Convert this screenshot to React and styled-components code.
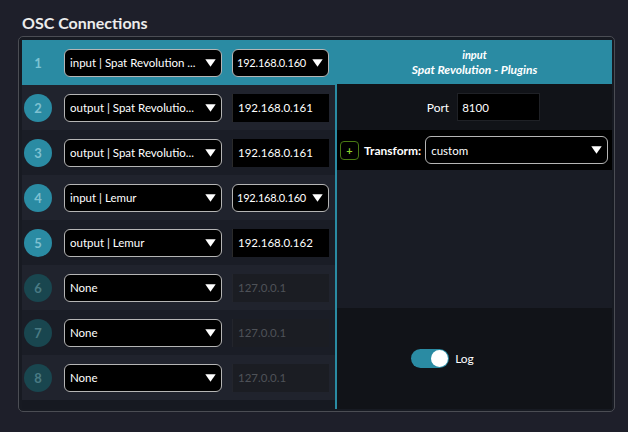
import React from "react";
import styled, { createGlobalStyle } from "styled-components";

const Global = createGlobalStyle`
  html, body { margin: 0; padding: 0; background: #1e1f2a; }
  body { font-family: Lato, "Noto Sans", sans-serif; color: #fff; }
  * { box-sizing: border-box; }
`;

const Page = styled.div`
  width: 628px;
  height: 432px;
  padding: 14px 13px 0 18px;
`;

const Title = styled.h1`
  margin: 0 0 4px 4px;
  font-size: 16px;
  font-weight: 700;
  line-height: 18px;
  color: #ececec;
`;

const Panel = styled.div`
  width: 597px;
  height: 376px;
  border: 1px solid #4b4d54;
  border-radius: 5px;
  padding: 3px 2px 2px 3px;
  display: flex;
  background: #171a22;
`;

const List = styled.div`
  width: 313px;
  flex: none;
  display: flex;
  flex-direction: column;
  background: #161921;
`;

const Row = styled.div`
  height: 45px;
  flex: none;
  display: flex;
  align-items: center;
  padding-left: 2px;
  background: ${(p) => (p.$selected ? "#2a8ba3" : p.$even ? "#20232d" : "#1a1d26")};
`;

const Num = styled.div`
  width: 28px;
  height: 28px;
  border-radius: 50%;
  flex: none;
  display: flex;
  align-items: center;
  justify-content: center;
  font-size: 13px;
  font-weight: 700;
  background: ${(p) => (p.$selected ? "transparent" : p.$active ? "#2a8ba3" : "#19464f")};
  color: ${(p) => (p.$selected ? "#7cc3d3" : p.$active ? "#7fc1d1" : "#4a7b84")};
  margin-right: 12px;
`;

const SelectBox = styled.div`
  width: ${(p) => p.$w}px;
  height: 28px;
  flex: none;
  background: #000;
  border: 1px solid #b5b5b5;
  border-radius: 6px;
  display: flex;
  align-items: center;
  padding: 0 5px 0 ${(p) => (p.$compact ? 4 : 5)}px;
  font-size: ${(p) => (p.$compact ? 11 : 11.5)}px;
  letter-spacing: ${(p) => (p.$compact ? "-0.2px" : "0")};
  color: #fff;
  gap: 3px;
`;

const SelectText = styled.span`
  flex: 1;
  white-space: nowrap;
  overflow: hidden;
`;

const IpInput = styled.div`
  width: 97px;
  height: 28px;
  flex: none;
  background: ${(p) => (p.$disabled ? "#1b1d23" : "#000")};
  border-left: 1px solid ${(p) => (p.$disabled ? "#23252c" : "#2a2a2a")};
  display: flex;
  align-items: center;
  padding-left: 5px;
  font-size: 11.5px;
  color: ${(p) => (p.$disabled ? "#4f5258" : "#fff")};
`;

const Gap = styled.div`
  width: 10px;
  flex: none;
`;

const Side = styled.div`
  flex: 1;
  display: flex;
  flex-direction: column;
`;

const Header = styled.div`
  height: 44px;
  flex: none;
  background: #2a8ba3;
  display: flex;
  flex-direction: column;
  align-items: center;
  justify-content: center;
  font-style: italic;
  font-weight: 700;
  color: #fff;
  line-height: 15px;
  padding-left: 2px;
`;

const HeaderSmall = styled.div`
  font-size: 11px;
`;
const HeaderBig = styled.div`
  font-size: 12px;
`;

const Body = styled.div`
  flex: 1;
  border-left: 2px solid #2a8ba3;
  display: flex;
  flex-direction: column;
`;

const PortSection = styled.div`
  height: 46px;
  background: #111318;
  display: flex;
  align-items: center;
  justify-content: center;
  gap: 8px;
  padding-left: 18px;
`;

const Label = styled.span`
  font-size: 12px;
  color: #fff;
  font-weight: ${(p) => (p.$bold ? 700 : 400)};
`;

const PortInput = styled.div`
  width: 83px;
  height: 28px;
  background: #000;
  border: 1px solid #1f2126;
  display: flex;
  align-items: center;
  padding-left: 4px;
  font-size: 11.5px;
  color: #fff;
`;

const TransformSection = styled.div`
  height: 40px;
  background: #000;
  display: flex;
  align-items: center;
  padding: 0 3px 0 3px;
  gap: 4px;
`;

const PlusButton = styled.div`
  width: 19px;
  height: 19px;
  border: 1px solid #4a7a14;
  border-radius: 4px;
  display: flex;
  align-items: center;
  justify-content: center;
  color: #8ed12f;
  font-size: 11px;
  font-weight: 700;
  margin-right: 1px;
`;

const Spacer = styled.div`
  flex: 1;
  background: #191c25;
`;

const LogSection = styled.div`
  height: 101px;
  background: #111318;
  display: flex;
  align-items: center;
  justify-content: center;
  gap: 6px;
  padding-right: 64px;
`;

const Toggle = styled.div`
  width: 38px;
  height: 19px;
  border-radius: 10px;
  background: #2a8ba3;
  display: flex;
  align-items: center;
  justify-content: flex-end;
  padding: 1px;
`;

const Knob = styled.div`
  width: 17px;
  height: 17px;
  border-radius: 50%;
  background: #fff;
`;

const Caret = () => (
  <svg width="11" height="8" viewBox="0 0 11 8" style={{ flex: "none" }}>
    <path d="M0.3 0.3 H10.7 L5.5 7.8 Z" fill="#fff" />
  </svg>
);

const Select = ({ w, compact, children }) => (
  <SelectBox $w={w} $compact={compact}>
    <SelectText>{children}</SelectText>
    <Caret />
  </SelectBox>
);

const rows = [
  { n: 1, name: "input | Spat Revolution ...", ip: "192.168.0.160", ipSelect: true, selected: true },
  { n: 2, name: "output | Spat Revolutio...", ip: "192.168.0.161" },
  { n: 3, name: "output | Spat Revolutio...", ip: "192.168.0.161" },
  { n: 4, name: "input | Lemur", ip: "192.168.0.160", ipSelect: true },
  { n: 5, name: "output | Lemur", ip: "192.168.0.162" },
  { n: 6, name: "None", ip: "127.0.0.1", disabled: true },
  { n: 7, name: "None", ip: "127.0.0.1", disabled: true },
  { n: 8, name: "None", ip: "127.0.0.1", disabled: true },
];

export default function App() {
  return (
    <Page>
      <Global />
      <Title>OSC Connections</Title>
      <Panel>
        <List>
          {rows.map((r) => (
            <Row key={r.n} $selected={r.selected} $even={r.n % 2 === 0}>
              <Num $selected={r.selected} $active={!r.disabled}>{r.n}</Num>
              <Select w={158}>{r.name}</Select>
              <Gap />
              {r.ipSelect ? (
                <Select w={97} compact>{r.ip}</Select>
              ) : (
                <IpInput $disabled={r.disabled}>{r.ip}</IpInput>
              )}
            </Row>
          ))}
        </List>
        <Side>
          <Header>
            <HeaderSmall>input</HeaderSmall>
            <HeaderBig>Spat Revolution - Plugins</HeaderBig>
          </Header>
          <Body>
            <PortSection>
              <Label>Port</Label>
              <PortInput>8100</PortInput>
            </PortSection>
            <TransformSection>
              <PlusButton>+</PlusButton>
              <Label $bold>Transform:</Label>
              <Select w={183}>custom</Select>
            </TransformSection>
            <Spacer />
            <LogSection>
              <Toggle>
                <Knob />
              </Toggle>
              <Label>Log</Label>
            </LogSection>
          </Body>
        </Side>
      </Panel>
    </Page>
  );
}
